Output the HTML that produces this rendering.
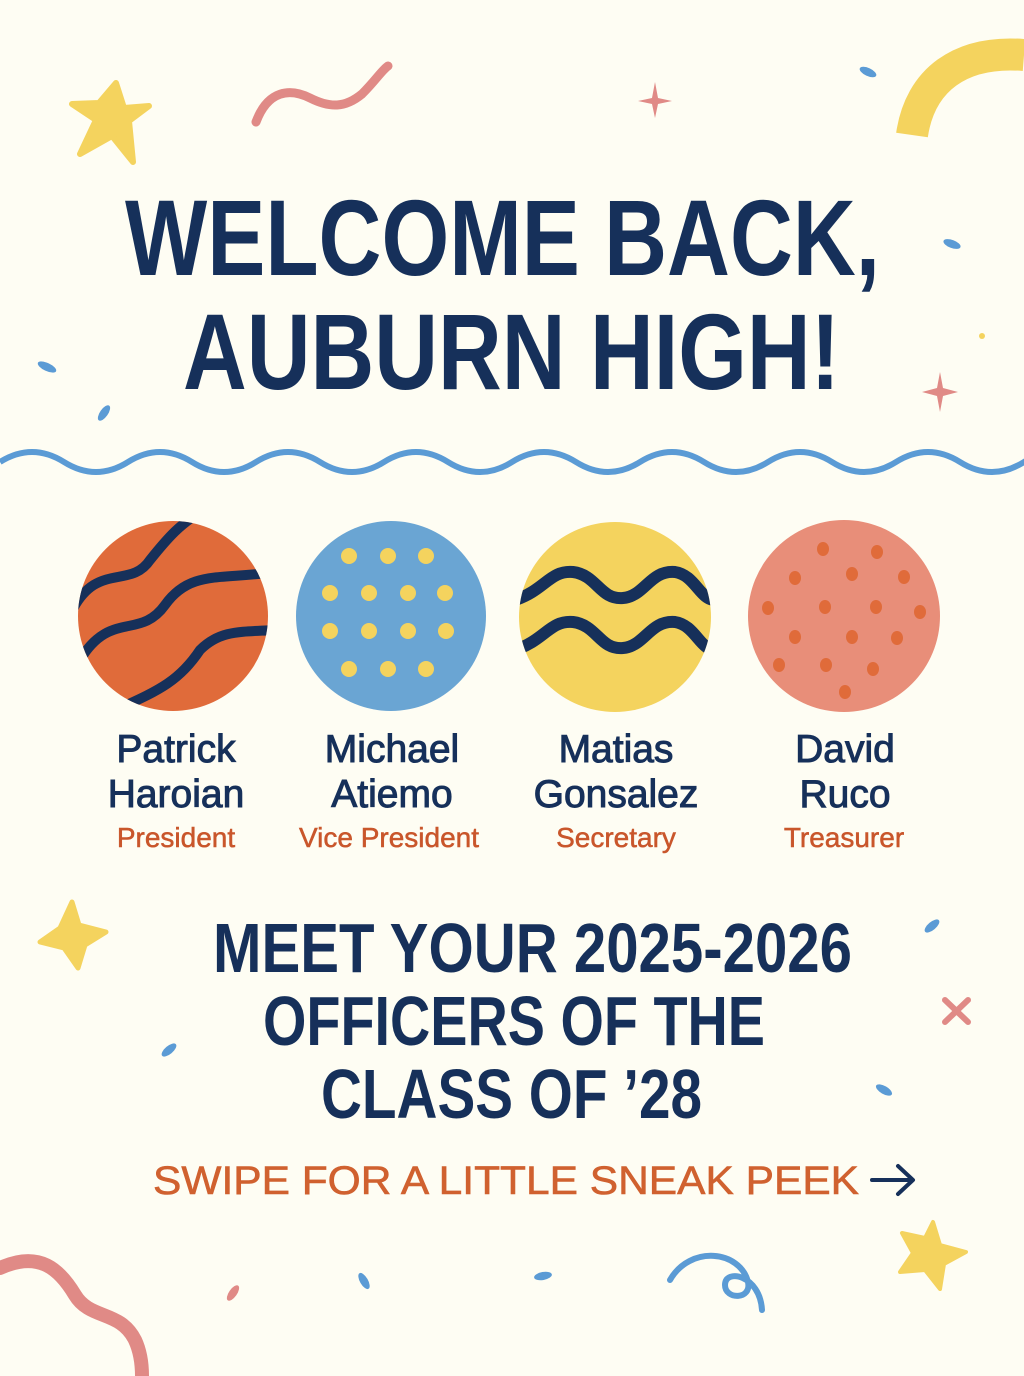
<!DOCTYPE html>
<html><head><meta charset="utf-8"><style>
html,body{margin:0;padding:0;background:#fefdf3;}
svg{display:block}
text{font-family:"Liberation Sans",sans-serif;}
</style></head><body>
<svg width="1024" height="1376" viewBox="0 0 1024 1376" xmlns="http://www.w3.org/2000/svg">
<rect width="1024" height="1376" fill="#fefdf3"/>
<path d="M116 83 L124 108 L149 106 L129 121 L133 162 L112 136 L80 154 L96 120 L72 104 L99 103 Z" fill="#f4d35e" stroke="#f4d35e" stroke-width="6" stroke-linejoin="round"/>
<path d="M256 122 C268 90 290 88 310 98 C330 108 345 108 362 94 C376 80 382 70 388 66" fill="none" stroke="#e08a86" stroke-width="9" stroke-linecap="round"/>
<path d="M655 82 L658 98 L672 101 L658 104 L655 118 L652 104 L638 101 L652 98 Z" fill="#e08a86"/>
<ellipse cx="868" cy="72" rx="9" ry="4" transform="rotate(25 868 72)" fill="#5b9bd5"/>
<path d="M912 135 C920 80 960 50 1024 55" fill="none" stroke="#f4d35e" stroke-width="32"/>
<ellipse cx="952" cy="244" rx="9" ry="4" transform="rotate(20 952 244)" fill="#5b9bd5"/>
<circle cx="982" cy="336" r="3" fill="#f4d35e"/>
<path d="M940 372 L943 388 L958 392 L943 396 L940 412 L937 396 L922 392 L937 388 Z" fill="#e08a86"/>
<ellipse cx="47" cy="367" rx="10" ry="4" transform="rotate(25 47 367)" fill="#5b9bd5"/>
<ellipse cx="104" cy="413" rx="9" ry="4" transform="rotate(-55 104 413)" fill="#5b9bd5"/>
<g fill="#16305a" font-weight="bold">
<text x="125" y="275" font-size="108" textLength="755" lengthAdjust="spacingAndGlyphs">WELCOME BACK,</text>
<text x="183" y="389" font-size="108" textLength="657" lengthAdjust="spacingAndGlyphs">AUBURN HIGH!</text>
</g>
<path d="M0 462 q32 -20 64 0 t64 0 t64 0 t64 0 t64 0 t64 0 t64 0 t64 0 t64 0 t64 0 t64 0 t64 0 t64 0 t64 0 t64 0 t64 0 t64 0" fill="none" stroke="#5b9bd5" stroke-width="6"/>
<defs>
<clipPath id="c1"><ellipse cx="173" cy="616" rx="95" ry="95"/></clipPath>
<clipPath id="c3"><ellipse cx="615" cy="617" rx="96" ry="95"/></clipPath>
</defs>
<ellipse cx="173" cy="616" rx="95" ry="95" fill="#e06b3a"/>
<g clip-path="url(#c1)" fill="none" stroke="#16305a" stroke-width="10">
<path d="M70 615 C95 560 130 590 150 560 C170 535 180 525 200 512"/>
<path d="M80 660 C110 610 140 640 165 605 C190 570 220 580 275 572"/>
<path d="M120 708 C160 690 180 680 200 650 C220 630 240 632 275 630"/>
</g>
<ellipse cx="391" cy="616" rx="95" ry="95" fill="#6aa5d3"/>
<g fill="#f4d35e">
<ellipse cx="349" cy="556" rx="8" ry="8"/><ellipse cx="388" cy="556" rx="8" ry="8"/><ellipse cx="426" cy="556" rx="8" ry="8"/>
<ellipse cx="330" cy="593" rx="8" ry="8"/><ellipse cx="369" cy="593" rx="8" ry="8"/><ellipse cx="408" cy="593" rx="8" ry="8"/><ellipse cx="445" cy="593" rx="8" ry="8"/>
<ellipse cx="330" cy="631" rx="8" ry="8"/><ellipse cx="369" cy="631" rx="8" ry="8"/><ellipse cx="408" cy="631" rx="8" ry="8"/><ellipse cx="446" cy="631" rx="8" ry="8"/>
<ellipse cx="349" cy="669" rx="8" ry="8"/><ellipse cx="388" cy="669" rx="8" ry="8"/><ellipse cx="426" cy="669" rx="8" ry="8"/>
</g>
<ellipse cx="615" cy="617" rx="96" ry="95" fill="#f4d35e"/>
<g clip-path="url(#c3)" fill="none" stroke="#16305a" stroke-width="12">
<path d="M515 600 C545 590 550 570 573 572 C597 575 600 600 623 598 C645 596 650 570 675 572 C695 575 700 600 715 600"/>
<path d="M515 650 C545 640 550 620 573 622 C597 625 600 650 623 648 C645 646 650 620 675 622 C695 625 700 650 715 650"/>
</g>
<ellipse cx="844" cy="616" rx="96" ry="96" fill="#e88e79"/>
<g fill="#e06b3a">
<ellipse cx="823" cy="549" rx="6" ry="7"/><ellipse cx="877" cy="552" rx="6" ry="7"/>
<ellipse cx="795" cy="578" rx="6" ry="7"/><ellipse cx="852" cy="574" rx="6" ry="7"/><ellipse cx="904" cy="577" rx="6" ry="7"/>
<ellipse cx="768" cy="608" rx="6" ry="7"/><ellipse cx="825" cy="607" rx="6" ry="7"/><ellipse cx="876" cy="607" rx="6" ry="7"/><ellipse cx="920" cy="612" rx="6" ry="7"/>
<ellipse cx="795" cy="637" rx="6" ry="7"/><ellipse cx="852" cy="637" rx="6" ry="7"/><ellipse cx="897" cy="638" rx="6" ry="7"/>
<ellipse cx="779" cy="665" rx="6" ry="7"/><ellipse cx="826" cy="665" rx="6" ry="7"/><ellipse cx="873" cy="669" rx="6" ry="7"/>
<ellipse cx="845" cy="692" rx="6" ry="7"/>
</g>
<g fill="#16305a" stroke="#16305a" stroke-width="1" font-size="39" text-anchor="middle">
<text x="176" y="762">Patrick</text><text x="176" y="807">Haroian</text>
<text x="392" y="762">Michael</text><text x="392" y="807">Atiemo</text>
<text x="616" y="762">Matias</text><text x="616" y="807">Gonsalez</text>
<text x="845" y="762">David</text><text x="845" y="807">Ruco</text>
</g>
<g fill="#c9562b" stroke="#c9562b" stroke-width="0.5" font-size="28" text-anchor="middle">
<text x="176" y="847">President</text>
<text x="389" y="847">Vice President</text>
<text x="616" y="847">Secretary</text>
<text x="844" y="847">Treasurer</text>
</g>
<path d="M72 902 L79 925 L106 932 L85 945 L78 968 L64 948 L40 942 L60 928 Z" fill="#f4d35e" stroke="#f4d35e" stroke-width="5" stroke-linejoin="round"/>
<ellipse cx="932" cy="926" rx="9" ry="4" transform="rotate(-40 932 926)" fill="#5b9bd5"/>
<path d="M945 1000 L968 1022 M968 1000 L945 1022" stroke="#e08a86" stroke-width="6" stroke-linecap="round"/>
<ellipse cx="169" cy="1050" rx="9" ry="4" transform="rotate(-40 169 1050)" fill="#5b9bd5"/>
<ellipse cx="884" cy="1090" rx="9" ry="4" transform="rotate(30 884 1090)" fill="#5b9bd5"/>
<g fill="#16305a" font-weight="bold" font-size="70">
<text x="213" y="972" textLength="639" lengthAdjust="spacingAndGlyphs">MEET YOUR 2025-2026</text>
<text x="263" y="1045" textLength="502" lengthAdjust="spacingAndGlyphs">OFFICERS OF THE</text>
<text x="321" y="1118" textLength="381" lengthAdjust="spacingAndGlyphs">CLASS OF ’28</text>
</g>
<text x="153" y="1194" font-size="40" fill="#d0612f" stroke="#d0612f" stroke-width="0.6" textLength="706" lengthAdjust="spacingAndGlyphs">SWIPE FOR A LITTLE SNEAK PEEK</text>
<path d="M872 1180 H912 M898 1166 L913 1180 L898 1194" fill="none" stroke="#16305a" stroke-width="4" stroke-linecap="round" stroke-linejoin="round"/>
<path d="M0 1268 C40 1250 60 1270 75 1295 C90 1320 120 1310 135 1340 C142 1355 142 1370 142 1376" fill="none" stroke="#e08a86" stroke-width="14" stroke-linecap="round"/>
<ellipse cx="233" cy="1293" rx="9" ry="4" transform="rotate(-55 233 1293)" fill="#e08a86"/>
<ellipse cx="364" cy="1281" rx="9" ry="4" transform="rotate(60 364 1281)" fill="#5b9bd5"/>
<ellipse cx="543" cy="1276" rx="9" ry="4" transform="rotate(-10 543 1276)" fill="#5b9bd5"/>
<path d="M670 1280 C690 1245 740 1250 748 1282 C752 1300 725 1300 725 1285 C725 1268 760 1275 762 1310" fill="none" stroke="#5b9bd5" stroke-width="6" stroke-linecap="round"/>
<path d="M933 1222 L940 1245 L966 1252 L944 1264 L940 1289 L925 1270 L900 1272 L913 1253 L902 1233 L925 1238 Z" fill="#f4d35e" stroke="#f4d35e" stroke-width="4" stroke-linejoin="round"/>
</svg>
</body></html>
